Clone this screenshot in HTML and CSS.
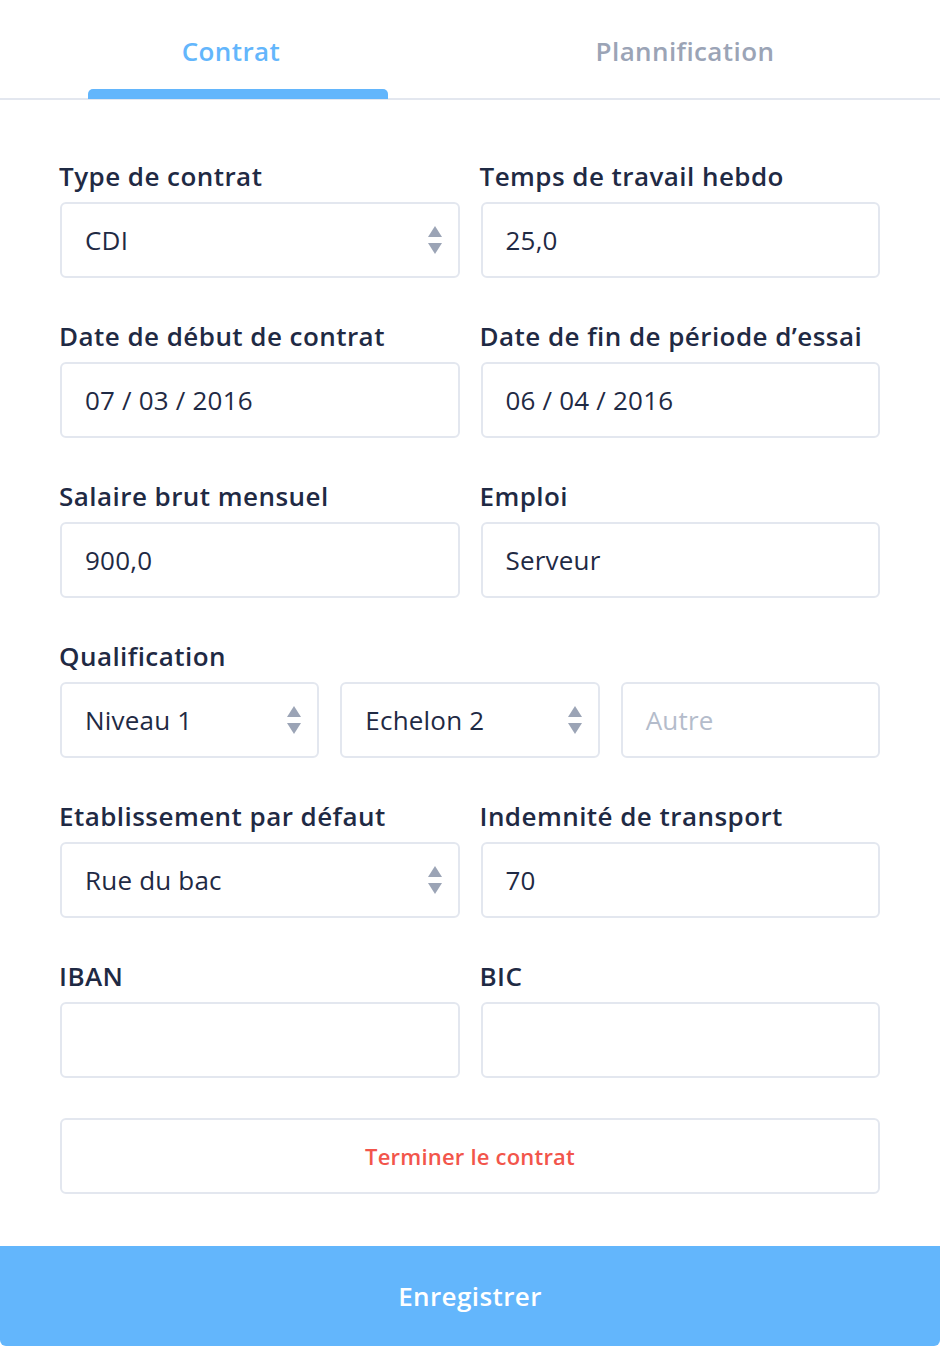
FILE: index.html
```html
<!DOCTYPE html>
<html lang="fr">
<head>
<meta charset="utf-8">
<title>Contrat</title>
<link rel="stylesheet" href="styles.css">
</head>
<body>
<div class="page">
  <nav class="tabs">
    <div class="tab active">Contrat</div>
    <div class="tab">Plannification</div>
  </nav>

  <form class="form">
    <div class="row two">
      <div class="field">
        <label class="label">Type de contrat</label>
        <div class="input select"><span>CDI</span><span class="arrows"></span></div>
      </div>
      <div class="field">
        <label class="label">Temps de travail hebdo</label>
        <div class="input"><span>25,0</span></div>
      </div>
    </div>

    <div class="row two">
      <div class="field">
        <label class="label">Date de début de contrat</label>
        <div class="input"><span>07 / 03 / 2016</span></div>
      </div>
      <div class="field">
        <label class="label">Date de fin de période d’essai</label>
        <div class="input"><span>06 / 04 / 2016</span></div>
      </div>
    </div>

    <div class="row two">
      <div class="field">
        <label class="label">Salaire brut mensuel</label>
        <div class="input"><span>900,0</span></div>
      </div>
      <div class="field">
        <label class="label">Emploi</label>
        <div class="input"><span>Serveur</span></div>
      </div>
    </div>

    <div class="field full">
      <label class="label">Qualification</label>
      <div class="row three">
        <div class="input select"><span>Niveau 1</span><span class="arrows"></span></div>
        <div class="input select"><span>Echelon 2</span><span class="arrows"></span></div>
        <div class="input"><span class="placeholder">Autre</span></div>
      </div>
    </div>

    <div class="row two">
      <div class="field">
        <label class="label">Etablissement par défaut</label>
        <div class="input select"><span>Rue du bac</span><span class="arrows"></span></div>
      </div>
      <div class="field">
        <label class="label">Indemnité de transport</label>
        <div class="input"><span>70</span></div>
      </div>
    </div>

    <div class="row two">
      <div class="field">
        <label class="label">IBAN</label>
        <div class="input"></div>
      </div>
      <div class="field">
        <label class="label">BIC</label>
        <div class="input"></div>
      </div>
    </div>

    <div class="danger-btn">Terminer le contrat</div>
  </form>

  <div class="save-btn">Enregistrer</div>
</div>
</body>
</html>
```

FILE: styles.css
```css
* { box-sizing: border-box; }
html, body {
  margin: 0;
  padding: 0;
  background: #ffffff;
}
body {
  font-family: "Open Sans", "Noto Sans", sans-serif;
  color: #1f2a44;
}
.page {
  width: 940px;
  height: 1346px;
  display: flex;
  flex-direction: column;
}
.tabs {
  height: 100px;
  border-bottom: 2px solid #e3e7ef;
  display: flex;
  padding-left: 88px;
  gap: 147px;
}
.tab {
  width: 300px;
  height: 98px;
  padding-top: 31px;
  text-align: center;
  font-size: 26px;
  font-weight: 600;
  color: #9ba4b6;
  letter-spacing: 0.4px;
  line-height: 40px;
  position: relative;
}
.tab.active {
  color: #63b6fc;
  padding-right: 14px;
}
.tab.active::after {
  content: "";
  position: absolute;
  left: 0;
  right: 0;
  bottom: -1px;
  height: 10px;
  background: #63b6fc;
  border-radius: 5px 5px 0 0;
}
.form {
  padding: 60px 60px 0 60px;
  display: flex;
  flex-direction: column;
  gap: 42px;
}
.row.two {
  display: grid;
  grid-template-columns: 1fr 1fr;
  column-gap: 21px;
}
.row.three {
  display: grid;
  grid-template-columns: 1fr 1fr 1fr;
  column-gap: 21px;
}
.field {
  display: flex;
  flex-direction: column;
  gap: 10px;
}
.label {
  display: block;
  font-size: 26px;
  font-weight: 600;
  line-height: 32px;
  color: #1f2a44;
  margin-left: -1px;
  letter-spacing: 0.45px;
}
.input {
  height: 76px;
  border: 2px solid #e3e7ef;
  border-radius: 6px;
  padding: 0 23px;
  display: flex;
  align-items: center;
  justify-content: space-between;
  font-size: 26px;
  color: #1f2a44;
  letter-spacing: 0.2px;
}
.placeholder { color: #b4bccb; }
.arrows {
  width: 14px;
  height: 28px;
  display: flex;
  flex-direction: column;
  justify-content: space-between;
  margin-right: -7px;
}
.arrows::before,
.arrows::after {
  content: "";
  display: block;
  width: 0;
  height: 0;
  border-left: 7px solid transparent;
  border-right: 7px solid transparent;
}
.arrows::before { border-bottom: 11px solid #9ba4b6; }
.arrows::after { border-top: 11px solid #9ba4b6; }
.danger-btn {
  margin-top: -2px;
  height: 76px;
  border: 2px solid #e3e7ef;
  border-radius: 6px;
  display: flex;
  align-items: center;
  justify-content: center;
  color: #f2554b;
  font-size: 22px;
  font-weight: 600;
  letter-spacing: 0.2px;
}
.save-btn {
  margin-top: 52px;
  height: 100px;
  background: #63b6fc;
  border-radius: 0 0 6px 6px;
  color: #ffffff;
  display: flex;
  align-items: center;
  justify-content: center;
  font-size: 26px;
  font-weight: 600;
  letter-spacing: 0.4px;
}
```
